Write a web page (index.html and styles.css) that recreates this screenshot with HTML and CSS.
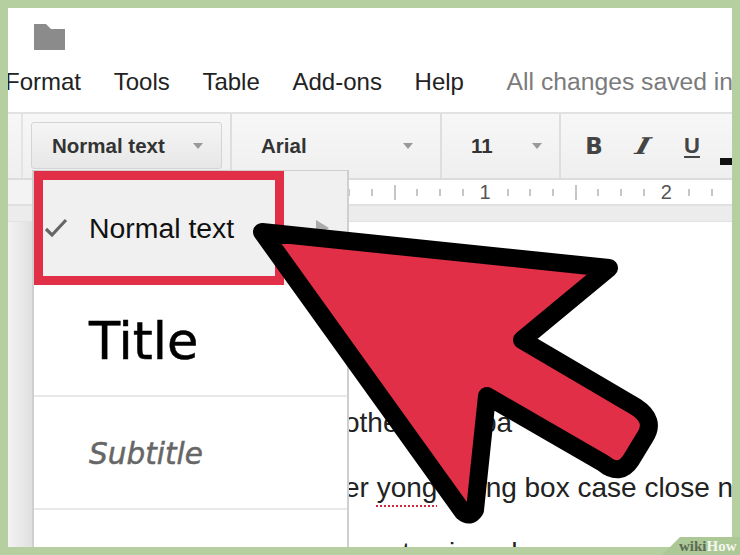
FILE: index.html
```html
<!DOCTYPE html>
<html lang="en">
<head>
<meta charset="utf-8">
<title>Docs paragraph styles</title>
<link rel="stylesheet" href="styles.css">
</head>
<body>
<div class="frame">
  <div class="app">
    <header class="head">
      <div class="folder-row">
        <svg class="folder" viewBox="0 0 31 27" width="31" height="27"><path d="M0 1h12l5 5h14v21H0z" fill="#8b8b8b"/></svg>
      </div>
      <nav class="menubar">
        <span>Format</span><span>Tools</span><span>Table</span><span>Add-ons</span><span>Help</span>
        <span class="saved">All changes saved in</span>
      </nav>
    </header>
    <div class="toolbar">
      <div class="tb-lead"></div>
      <div class="tb-group tb-style">
        <div class="tb-button"><span class="tb-label">Normal text</span><i class="caret"></i></div>
      </div>
      <div class="tb-group tb-font"><span class="tb-label">Arial</span><i class="caret"></i></div>
      <div class="tb-group tb-size"><span class="tb-label">11</span><i class="caret"></i></div>
      <div class="tb-group tb-format">
        <span class="fmt fmt-b">B</span>
        <span class="fmt fmt-i">I</span>
        <span class="fmt fmt-u">U</span>
        <span class="color-bar"></span>
      </div>
    </div>
    <div class="ruler">
      <i class="tick"></i><i class="tick"></i><i class="tick major"></i><i class="tick"></i><i class="tick"></i><i class="tick"></i>
      <b class="num">1</b>
      <i class="tick"></i><i class="tick"></i><i class="tick"></i><i class="tick major"></i><i class="tick"></i><i class="tick"></i><i class="tick"></i>
      <b class="num">2</b>
      <i class="tick"></i><i class="tick"></i>
    </div>
    <div class="strip"></div>
    <div class="doc-row">
      <div class="gutter"></div>
      <main class="page">
        <p class="line">other sack pa</p>
        <p class="line">er <span class="typo">yong</span> swing box case close n</p>
        <p class="line line-last">rose too in a d</p>
      </main>
    </div>
    <div class="menu">
      <div class="item item-normal">
        <svg class="check" viewBox="0 0 24 20" width="24" height="20"><path d="M2 11l6 6L22 2" fill="none" stroke="#666" stroke-width="3.2"/></svg>
        <span class="item-normal-text">Normal text</span>
        <i class="submenu"></i>
      </div>
      <div class="item item-title"><span>Title</span></div>
      <div class="item item-subtitle"><span>Subtitle</span></div>
      <div class="item item-rest"></div>
      <div class="highlight"></div>
    </div>
  </div>
  <svg class="arrow" viewBox="0 0 740 555" width="740" height="555">
    <path d="M262 232L609 268L522 340L636 407Q656 420 645 437L631 460Q620 477 603 463L487 396L475 510Q470 518 463 512Z" fill="#e02f46" stroke="#000" stroke-width="18" stroke-linejoin="round"/>
  </svg>
  <div class="badge"><span class="badge-wiki">wiki</span><span class="badge-how">How</span></div>
</div>
</body>
</html>
```

FILE: styles.css
```css
* { box-sizing: border-box; }
html, body { margin: 0; padding: 0; }
body { width: 740px; height: 555px; overflow: hidden; font-family: "Liberation Sans", Arial, sans-serif; }

.frame { position: relative; width: 740px; height: 555px; padding: 8px 8px 8px 8px; background: #b5cfa0; }
.app { position: relative; width: 724px; height: 539px; background: #fff; overflow: hidden; display: flex; flex-direction: column; }

.head { height: 104px; flex: none; display: flex; flex-direction: column; }
.folder-row { height: 60px; padding: 15px 0 0 26px; flex: none; }
.folder { display: block; }
.menubar { display: flex; gap: 32.7px; margin-left: -3px; font-size: 24px; line-height: 28px; color: #222; white-space: nowrap; }
.saved { color: #7b7b7b; margin-left: 10px; font-size: 24.7px; }

.toolbar { height: 68px; flex: none; display: flex; background: linear-gradient(#f7f7f7, #efefef); border-top: 2px solid #e2e2e2; border-bottom: 2px solid #dcdcdc; }
.tb-lead { width: 15px; flex: none; border-right: 2px solid #e4e4e4; }
.tb-group { flex: none; display: flex; align-items: center; border-right: 2px solid #dedede; }
.tb-style { width: 209px; padding: 0 8px; }
.tb-button { width: 191px; height: 47px; margin-top: -1px; padding: 0 18px 0 20px; display: flex; align-items: center; justify-content: space-between; border: 1px solid #d4d4d4; border-radius: 3px; background: linear-gradient(#f5f5f5, #e7e7e7); }
.tb-label { font-size: 20.5px; font-weight: 700; color: #333; }
.tb-font { width: 210px; padding: 0 27px 0 29px; justify-content: space-between; }
.tb-size { width: 119px; padding: 0 17px 0 29px; justify-content: space-between; }
.tb-format { flex: 1; border-right: 0; position: relative; padding-left: 23px; gap: 29px; }
.caret { display: block; width: 0; height: 0; border-left: 5.5px solid transparent; border-right: 5.5px solid transparent; border-top: 6px solid #999; }
.fmt { width: 20px; text-align: center; color: #444; font-size: 23px; line-height: 30px; }
.fmt-b { font-family: "DejaVu Sans", sans-serif; font-weight: 700; }
.fmt-i { font-family: "DejaVu Serif", serif; font-weight: 700; transform: skewX(-28deg) scaleX(1.25); }
.fmt-u { font-size: 22px; font-weight: 700; text-decoration: underline; text-underline-offset: 3px; }
.color-bar { position: absolute; left: 159px; top: 44px; width: 14px; height: 7px; background: #111; }

.ruler { height: 26px; flex: none; display: flex; align-items: center; padding-left: 330px; border-bottom: 2px solid #e0e0e0; background: linear-gradient(to right, #f3f3f3 24px, #fff 24px); }
.tick { display: block; width: 22.65px; height: 7px; flex: none; position: relative; background: linear-gradient(#c6c6c6, #c6c6c6) center / 2px 100% no-repeat; }
.major { height: 15px; background-size: 2px 100%; }
.num { display: block; width: 22.65px; flex: none; text-align: center; font-size: 20px; line-height: 24px; font-weight: 400; color: #555; }

.strip { height: 16px; flex: none; background: #ececec; border-bottom: 1px solid #e2e2e2; }
.doc-row { flex: 1; min-height: 0; display: flex; }
.gutter { width: 24px; flex: none; background: linear-gradient(to right, #f3f3f3, #e0e0e0); }
.page { flex: 1; min-width: 0; padding: 168px 0 0 312px; overflow: hidden; background: #fff; }
.line { margin: 0; font-size: 28px; line-height: 65px; color: #222; white-space: nowrap; }
.line-last { margin-left: -4px; }
.typo { text-decoration: underline dotted #d4283c 2px; text-underline-offset: 8px; }

.menu { position: absolute; left: 24px; top: 162px; width: 317px; height: 377px; background: #fff; border: 1px solid #cfcfcf; border-width: 1px 2px 0 2px; display: flex; flex-direction: column; }
.item { flex: none; display: flex; align-items: center; }
.item-normal { height: 114px; background: #f0f0f0; padding-left: 10px; }
.check { flex: none; display: block; }
.item-normal-text { margin-left: 21px; font-size: 28.4px; color: #111; }
.submenu { display: block; margin-left: auto; margin-right: 18px; width: 0; height: 0; border-top: 8px solid transparent; border-bottom: 8px solid transparent; border-left: 13px solid #aaa; }
.item-title { height: 112px; padding: 2px 0 0 55px; border-bottom: 2px solid #e8e8e8; font-family: "DejaVu Sans", sans-serif; font-size: 51px; color: #000; -webkit-text-stroke: 0.5px #000; }
.item-subtitle { height: 113px; padding: 2px 0 0 55px; border-bottom: 2px solid #e8e8e8; font-family: "DejaVu Sans", sans-serif; font-style: italic; font-size: 29.5px; color: #666; -webkit-text-stroke: 0.5px #666; }
.item-rest { flex: 1; }
.highlight { position: absolute; left: 0; top: 0; width: 250px; height: 114px; border: 9px solid #e02f46; }

.arrow { position: absolute; left: 0; top: 0; display: block; }

.badge { position: absolute; right: 0; bottom: 0; width: 78px; height: 18px; padding: 0 4px 0 17px; background: #abc896; clip-path: polygon(18px 0, 100% 0, 100% 100%, 0 100%); font-family: "Liberation Serif", serif; font-weight: 700; font-size: 15px; line-height: 18px; white-space: nowrap; text-align: right; }
.badge-wiki { color: #5d6b55; }
.badge-how { color: #f4f7f0; }
```
